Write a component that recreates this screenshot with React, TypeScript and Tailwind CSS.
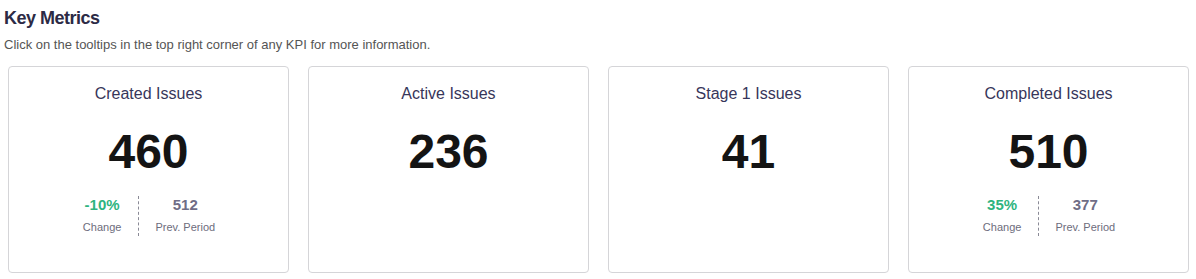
import React from "react";

interface Metric {
  title: string;
  value: string;
  change?: string;
  prev?: string;
}

const metrics: Metric[] = [
  { title: "Created Issues", value: "460", change: "-10%", prev: "512" },
  { title: "Active Issues", value: "236" },
  { title: "Stage 1 Issues", value: "41" },
  { title: "Completed Issues", value: "510", change: "35%", prev: "377" },
];

const MetricCard = ({ m }: { m: Metric }) => (
  <div className="h-[207px] rounded-[4px] border border-[#d5d5d8] bg-white pt-[17px] flex flex-col items-center">
    <div className="text-[16px] leading-[20px] text-[#37365a]">{m.title}</div>
    <div className="mt-[24px] text-[48px] leading-[48px] font-bold text-[#141414]">{m.value}</div>
    {m.change && (
      <div className="mt-[20px] flex">
        <div className="px-[17px] flex flex-col items-center">
          <span className="text-[15px] leading-[18px] font-bold text-[#2fb47f]">{m.change}</span>
          <span className="mt-[4px] text-[11px] leading-[18px] text-[#6d6c7c]">Change</span>
        </div>
        <div className="px-4 flex flex-col items-center border-l border-dashed border-[#8a8a96]">
          <span className="text-[15px] leading-[18px] font-bold text-[#6f6d86]">{m.prev}</span>
          <span className="mt-[4px] text-[11px] leading-[18px] text-[#6d6c7c]">Prev. Period</span>
        </div>
      </div>
    )}
  </div>
);

export default function App() {
  return (
    <div className="w-[1196px] h-[279px] bg-white font-['Liberation_Sans',Arial,sans-serif]">
      <div className="pl-[4px] pt-[7px]">
        <h2 className="text-[18px] leading-[22px] font-bold text-[#2c2a45] tracking-[-0.5px]">Key Metrics</h2>
        <p className="mt-[8px] text-[13px] leading-[16px] text-[#555]">
          Click on the tooltips in the top right corner of any KPI for more information.
        </p>
      </div>
      <div className="mt-[13px] pl-[8px] pr-[7px] grid grid-cols-4 gap-[19px]">
        {metrics.map((m) => (
          <MetricCard key={m.title} m={m} />
        ))}
      </div>
    </div>
  );
}
